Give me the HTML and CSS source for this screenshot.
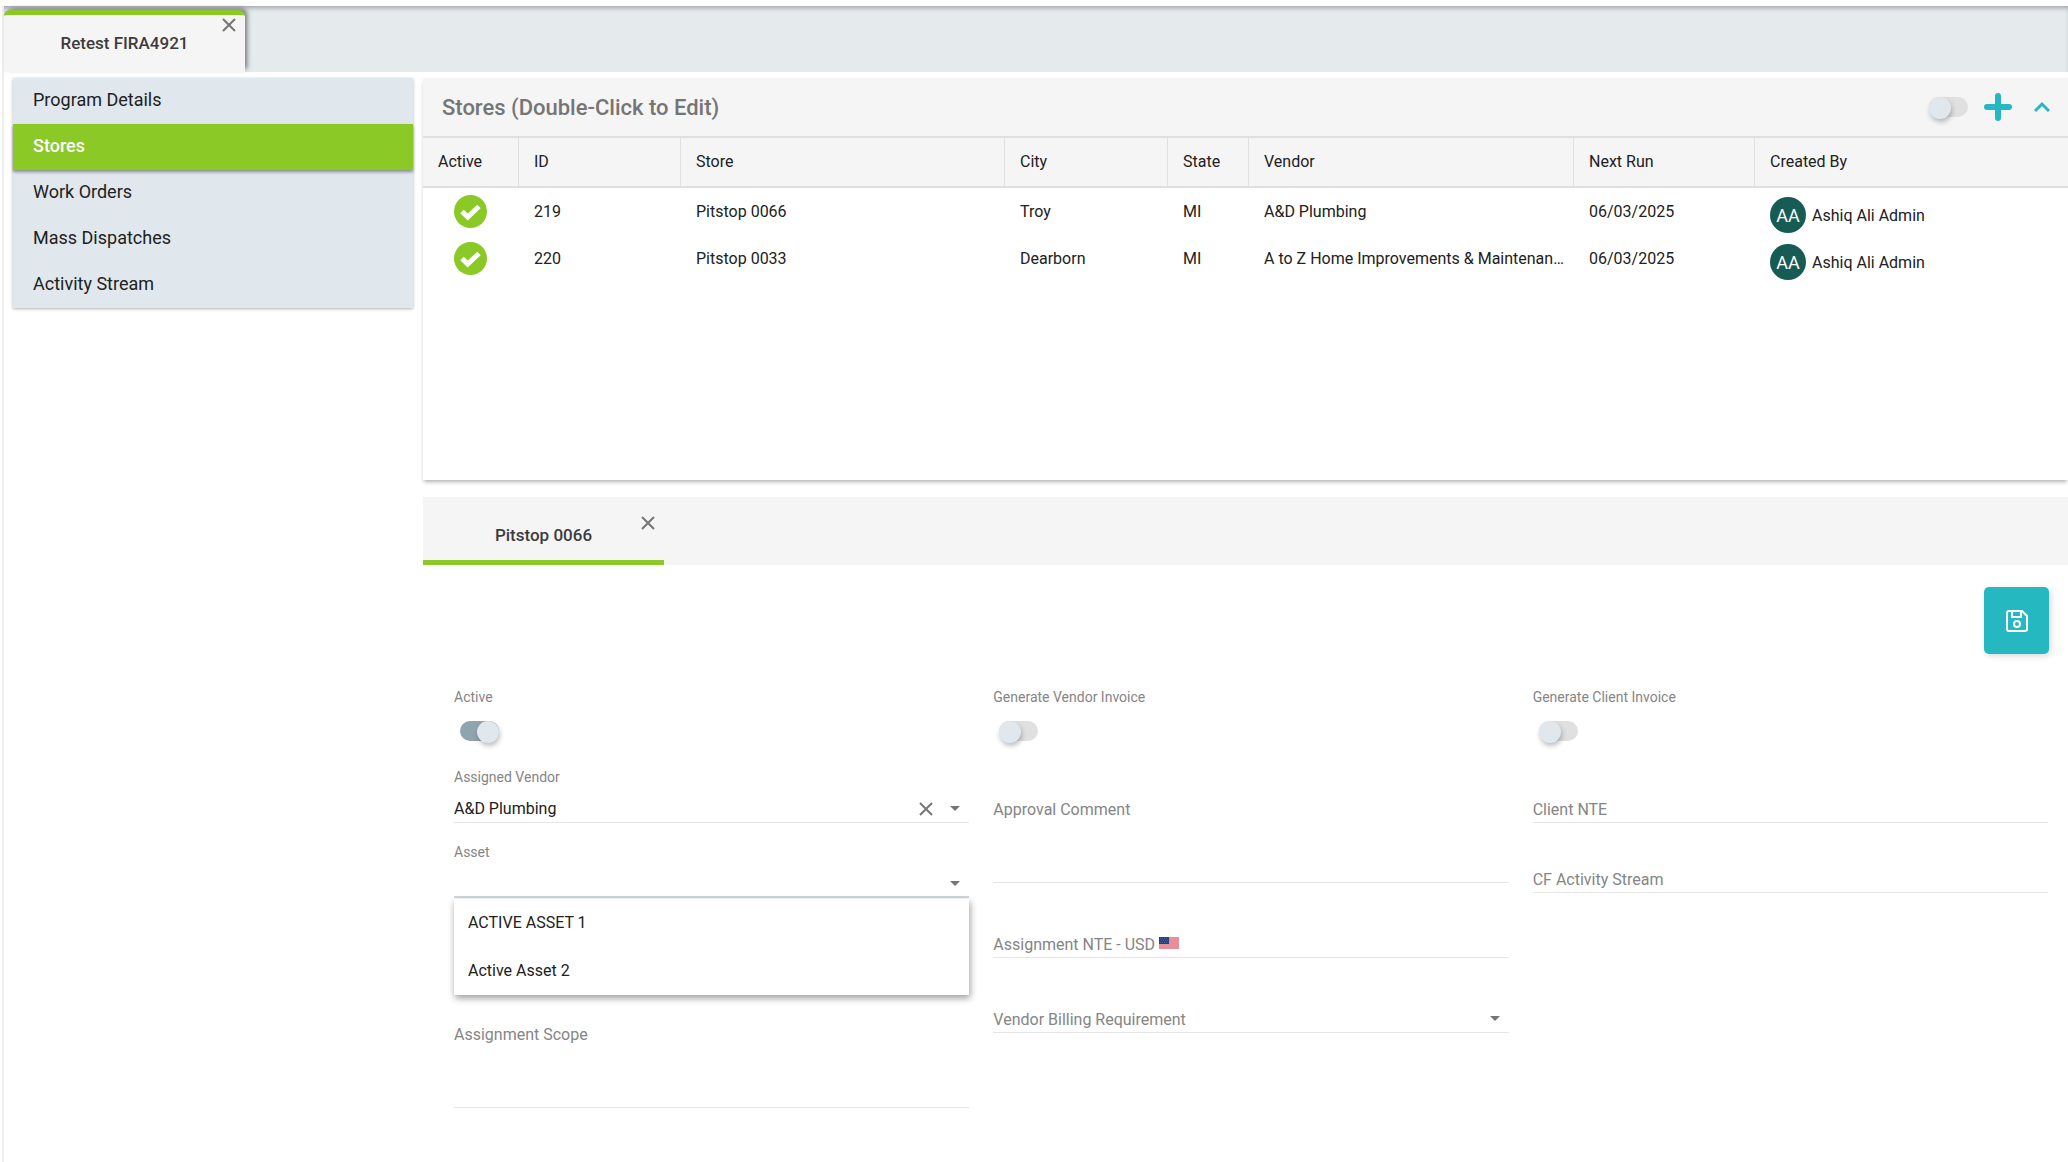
FILE: index.html
```html
<!DOCTYPE html>
<html lang="en">
<head>
    <meta charset="UTF-8">
    <meta name="viewport" content="width=device-width, initial-scale=1.0">
    <title>Retest FIRA4921</title>
    <link rel="stylesheet" href="styles.css">
</head>
<body>

    <!-- Program tabs -->
    <header class="top-bar">
        <div class="program-tab">
            <span>Retest FIRA4921</span>
            <button class="close-button" aria-label="Close program">
                <svg width="14" height="14" viewBox="0 0 14 14"><path d="M1 1l12 12M13 1L1 13"/></svg>
            </button>
        </div>
    </header>

    <div class="page">
        <nav class="side-menu">
            <a href="#">Program Details</a>
            <a href="#" class="selected">Stores</a>
            <a href="#">Work Orders</a>
            <a href="#">Mass Dispatches</a>
            <a href="#">Activity Stream</a>
        </nav>

        <main class="content">
            <!-- Stores grid -->
            <section class="stores-card">
                <div class="card-header">
                    <h2>Stores (Double-Click to Edit)</h2>
                    <div class="card-actions">
                        <input type="checkbox" class="toggle" aria-label="Show inactive stores">
                        <button class="icon-button add-button" aria-label="Add store">
                            <svg width="28" height="28" viewBox="0 0 28 28"><path d="M14 3v22M3 14h22"/></svg>
                        </button>
                        <button class="icon-button collapse-button" aria-label="Collapse">
                            <svg width="16" height="12" viewBox="0 0 16 12"><path d="M1 10l7-7 7 7"/></svg>
                        </button>
                    </div>
                </div>

                <table class="stores-table">
                    <thead>
                        <tr>
                            <th class="col-active">Active</th>
                            <th class="col-id">ID</th>
                            <th class="col-store">Store</th>
                            <th class="col-city">City</th>
                            <th class="col-state">State</th>
                            <th class="col-vendor">Vendor</th>
                            <th class="col-run">Next Run</th>
                            <th>Created By</th>
                        </tr>
                    </thead>
                    <tbody>
                        <tr>
                            <td class="check-cell">
                                <svg class="check" width="33" height="33" viewBox="0 0 33 33"><circle cx="16.5" cy="16.5" r="16.5"/><path d="M8 16.500l5.700 5.500L25 11.500"/></svg>
                            </td>
                            <td>219</td>
                            <td>Pitstop 0066</td>
                            <td>Troy</td>
                            <td>MI</td>
                            <td>A&amp;D Plumbing</td>
                            <td>06/03/2025</td>
                            <td><div class="user"><span class="avatar">AA</span>Ashiq Ali Admin</div></td>
                        </tr>
                        <tr>
                            <td class="check-cell">
                                <svg class="check" width="33" height="33" viewBox="0 0 33 33"><circle cx="16.5" cy="16.5" r="16.5"/><path d="M8 16.500l5.700 5.500L25 11.500"/></svg>
                            </td>
                            <td>220</td>
                            <td>Pitstop 0033</td>
                            <td>Dearborn</td>
                            <td>MI</td>
                            <td>A to Z Home Improvements &amp; Maintenance</td>
                            <td>06/03/2025</td>
                            <td><div class="user"><span class="avatar">AA</span>Ashiq Ali Admin</div></td>
                        </tr>
                    </tbody>
                </table>
            </section>

            <!-- Store details -->
            <section>
                <div class="store-tabs">
                    <div class="store-tab">
                        <span>Pitstop 0066</span>
                        <button class="close-button" aria-label="Close store">
                            <svg width="14" height="14" viewBox="0 0 14 14"><path d="M1 1l12 12M13 1L1 13"/></svg>
                        </button>
                    </div>
                </div>

                <div class="toolbar">
                    <button class="save-button" aria-label="Save">
                        <svg width="22" height="22" viewBox="0 0 22 22"><path d="M1 3a2 2 0 0 1 2-2h13l5 5v13a2 2 0 0 1-2 2H3a2 2 0 0 1-2-2zM6 1v6h9V1"/><circle cx="11" cy="14" r="3"/></svg>
                    </button>
                </div>

                <form class="store-form">
                    <div class="form-column">
                        <div class="toggle-field">
                            <label for="active">Active</label>
                            <input type="checkbox" class="toggle" id="active" checked>
                        </div>
                        <div class="field">
                            <label for="vendor">Assigned Vendor</label>
                            <div class="control">
                                <select id="vendor"><option>A&amp;D Plumbing</option></select>
                                <button type="button" class="clear-button" aria-label="Clear vendor">
                                    <svg width="14" height="14" viewBox="0 0 14 14"><path d="M1 1l12 12M13 1L1 13"/></svg>
                                </button>
                            </div>
                        </div>
                        <div class="field open">
                            <label for="asset">Asset</label>
                            <div class="control">
                                <select id="asset"><option></option></select>
                                <ul class="menu">
                                    <li>ACTIVE ASSET 1</li>
                                    <li>Active Asset 2</li>
                                </ul>
                            </div>
                        </div>
                        <div class="field empty scope">
                            <label for="scope">Assignment Scope</label>
                            <textarea id="scope"></textarea>
                        </div>
                    </div>

                    <div class="form-column">
                        <div class="toggle-field">
                            <label for="vendorInvoice">Generate Vendor Invoice</label>
                            <input type="checkbox" class="toggle" id="vendorInvoice">
                        </div>
                        <div class="field empty">
                            <label for="comment">Approval Comment</label>
                            <textarea id="comment"></textarea>
                        </div>
                        <div class="field empty">
                            <label for="nte">Assignment NTE - USD
                                <svg class="flag" width="20" height="12" viewBox="0 0 20 12"><path fill="#e68f98" d="M0 0h20v12H0z"/><path fill="#23407f" d="M0 0h10v7H0z"/><path stroke="#4a659f" stroke-dasharray="1 1" d="M1 1.500h8M2 3.500h7M1 5.500h8"/></svg>
                            </label>
                            <input type="text" id="nte">
                        </div>
                        <div class="field empty">
                            <label for="billing">Vendor Billing Requirement</label>
                            <div class="control">
                                <select id="billing"><option></option></select>
                            </div>
                        </div>
                    </div>

                    <div class="form-column compact">
                        <div class="toggle-field">
                            <label for="clientInvoice">Generate Client Invoice</label>
                            <input type="checkbox" class="toggle" id="clientInvoice">
                        </div>
                        <div class="field empty">
                            <label for="clientNte">Client NTE</label>
                            <input type="text" id="clientNte">
                        </div>
                        <div class="field empty">
                            <label for="stream">CF Activity Stream</label>
                            <input type="text" id="stream">
                        </div>
                    </div>
                </form>
            </section>
        </main>
    </div>

</body>
</html>
```
FILE: styles.css
```css
* {
    box-sizing: border-box;
}
body {
    margin: 0;
    padding: 6px 0 0 2px;
    font-family: Roboto, Arial, sans-serif;
    font-size: 16px;
    color: #212121;
    background-color: white;
}
h2 {
    margin: 0;
    font-size: 22px;
    font-weight: 500;
    color: #757575;
}
button {
    padding: 0;
    border: none;
    background: none;
    cursor: pointer;
}
svg {
    display: block;
    fill: none;
}

/* Program tabs */
.top-bar {
    height: 66px;
    padding-top: 4px;
    border-left: 2px solid #eeeeee;
    background-color: #e5eaed;
    box-shadow: inset 0 4px 5px -2px rgba(0, 0, 0, 0.3);
}
.program-tab {
    position: relative;
    display: flex;
    align-items: center;
    justify-content: center;
    width: 241px;
    height: 62px;
    padding-bottom: 2px;
    border-top: 5px solid #8ac926;
    border-radius: 6px 6px 0 0;
    background-color: #f5f5f5;
    box-shadow: 3px -2px 5px -1px rgba(0, 0, 0, 0.5);
    font-size: 17px;
    font-weight: 500;
    color: #3c3c3c;
}
.close-button {
    position: absolute;
    top: 3px;
    right: 9px;
}
.close-button svg,
.clear-button svg {
    stroke: #757575;
    stroke-width: 2;
}

.page {
    display: flex;
    align-items: flex-start;
    gap: 10px;
    min-height: calc(100vh - 72px);
    padding: 6px 0 0 9px;
    border-left: 2px solid #eeeeee;
}

/* Side menu */
.side-menu {
    flex: none;
    width: 400px;
    background-color: #e0e8ed;
    box-shadow: 0 1px 3px rgba(0, 0, 0, 0.3);
}
.side-menu a {
    display: block;
    height: 46px;
    padding-left: 20px;
    font-size: 18px;
    line-height: 44px;
    color: #212121;
    text-decoration: none;
}
.side-menu .selected {
    background-color: #8ac926;
    box-shadow: 0 2px 3px rgba(0, 0, 0, 0.4);
    font-weight: 500;
    color: white;
}

.content {
    flex: 1;
    min-width: 0;
}

/* Stores grid */
.stores-card {
    min-height: 402px;
    box-shadow: 0 3px 4px -1px rgba(0, 0, 0, 0.3);
}
.card-header {
    display: flex;
    align-items: center;
    justify-content: space-between;
    height: 58px;
    padding: 0 18px 0 19px;
    background-color: #f5f5f5;
}
.card-actions {
    display: flex;
    align-items: center;
}
.icon-button svg {
    stroke: #26b8c0;
    stroke-width: 3;
}
.add-button {
    margin: 0 22px 0 16px;
}
.add-button svg {
    stroke-width: 6;
    stroke-linecap: round;
}
.stores-table {
    width: 100%;
    table-layout: fixed;
    border-collapse: separate;
    border-spacing: 0;
}
.stores-table th {
    height: 52px;
    padding: 0 15px 1px;
    border-top: 2px solid #e0e0e0;
    border-bottom: 2px solid #e0e0e0;
    border-right: 1px solid #e0e0e0;
    background-color: #f5f5f5;
    font-weight: 400;
    text-align: left;
}
.stores-table th:last-child {
    border-right: none;
}
.stores-table td {
    height: 47px;
    padding: 0 8px 0 15px;
    overflow: hidden;
    text-overflow: ellipsis;
    white-space: nowrap;
}
.stores-table .check-cell {
    padding: 0 31px;
}
.col-active {
    width: 96px;
}
.col-id {
    width: 162px;
}
.col-store {
    width: 324px;
}
.col-city {
    width: 163px;
}
.col-state {
    width: 81px;
}
.col-vendor {
    width: 325px;
}
.col-run {
    width: 181px;
}
.check circle {
    fill: #8ac926;
}
.check path {
    stroke: white;
    stroke-width: 5;
}
.user {
    display: flex;
    align-items: center;
    gap: 6px;
    padding-top: 7px;
}
.avatar {
    width: 36px;
    height: 36px;
    border-radius: 50%;
    background-color: #175c54;
    font-size: 18px;
    line-height: 38px;
    text-align: center;
    color: white;
}

/* Store tabs */
.store-tabs {
    height: 68px;
    margin-top: 17px;
    background-color: #f5f5f5;
}
.store-tab {
    position: relative;
    display: flex;
    align-items: center;
    justify-content: center;
    width: 241px;
    height: 68px;
    padding-top: 12px;
    border-bottom: 5px solid #8ac926;
    font-size: 17px;
    font-weight: 500;
    color: #3c3c3c;
}
.store-tab .close-button {
    top: 19px;
}
.toolbar {
    display: flex;
    justify-content: flex-end;
    padding: 22px 19px 32px;
}
.save-button {
    display: flex;
    align-items: center;
    justify-content: center;
    width: 65px;
    height: 67px;
    border-radius: 5px;
    background-color: #26b8c0;
    box-shadow: 2px 2px 6px rgba(0, 0, 0, 0.15);
}
.save-button svg {
    stroke: white;
    stroke-width: 2;
}

/* Store form */
.store-form {
    display: grid;
    grid-template-columns: repeat(3, 1fr);
    gap: 24px;
    padding: 0 20px 0 31px;
}
.form-column {
    display: flex;
    flex-direction: column;
    gap: 18px;
}
.compact {
    gap: 13px;
}
label {
    display: block;
    font-size: 14px;
    line-height: 22px;
    color: #858585;
}
.toggle-field {
    height: 62px;
}
.compact .toggle-field {
    height: 67px;
}
.toggle-field .toggle {
    margin: 13px 0 0 6px;
}
.toggle {
    appearance: none;
    display: block;
    width: 39px;
    height: 20px;
    margin: 0;
    border-radius: 10px;
    background-color: #e0e0e0;
    cursor: pointer;
}
.toggle::before {
    content: "";
    display: block;
    width: 22px;
    height: 22px;
    border-radius: 50%;
    background-color: #e0e8ed;
    box-shadow: 1px 3px 5px rgba(0, 0, 0, 0.25);
}
.toggle:checked {
    background-color: #90a4ae;
}
.toggle:checked::before {
    margin-left: 17px;
}
.field {
    display: grid;
    row-gap: 6px;
}
.control {
    position: relative;
}
.field input,
.field select,
.field textarea {
    appearance: none;
    display: block;
    width: 100%;
    height: 29px;
    padding: 0;
    border: none;
    border-bottom: 1px solid #e6e6e6;
    outline: none;
    border-radius: 0;
    background: none;
    font-family: inherit;
    font-size: 16px;
    color: #212121;
    resize: none;
}
.field textarea {
    height: 89px;
}
.control::after {
    content: "";
    position: absolute;
    top: 12px;
    right: 9px;
    border: 5px solid transparent;
    border-top-color: #757575;
    border-bottom: none;
}
.clear-button {
    position: absolute;
    top: 8px;
    right: 36px;
}
/* Label lies on the first line of an empty field */
.empty {
    padding-top: 28px;
}
.empty > * {
    grid-area: 1 / 1;
}
.empty label {
    height: 29px;
    font-size: 16px;
    line-height: 31px;
}
.form-column .scope {
    margin-top: 75px;
}
.flag {
    display: inline-block;
    vertical-align: 1px;
}
.open select {
    border-bottom: 2px solid #cfd8dc;
}
.menu {
    position: absolute;
    top: 30px;
    left: 0;
    z-index: 1;
    width: 100%;
    margin: 0;
    padding: 0;
    list-style: none;
    background-color: white;
    box-shadow: 1px 3px 7px rgba(0, 0, 0, 0.4);
}
.menu li {
    padding-left: 14px;
    line-height: 48px;
}
```
